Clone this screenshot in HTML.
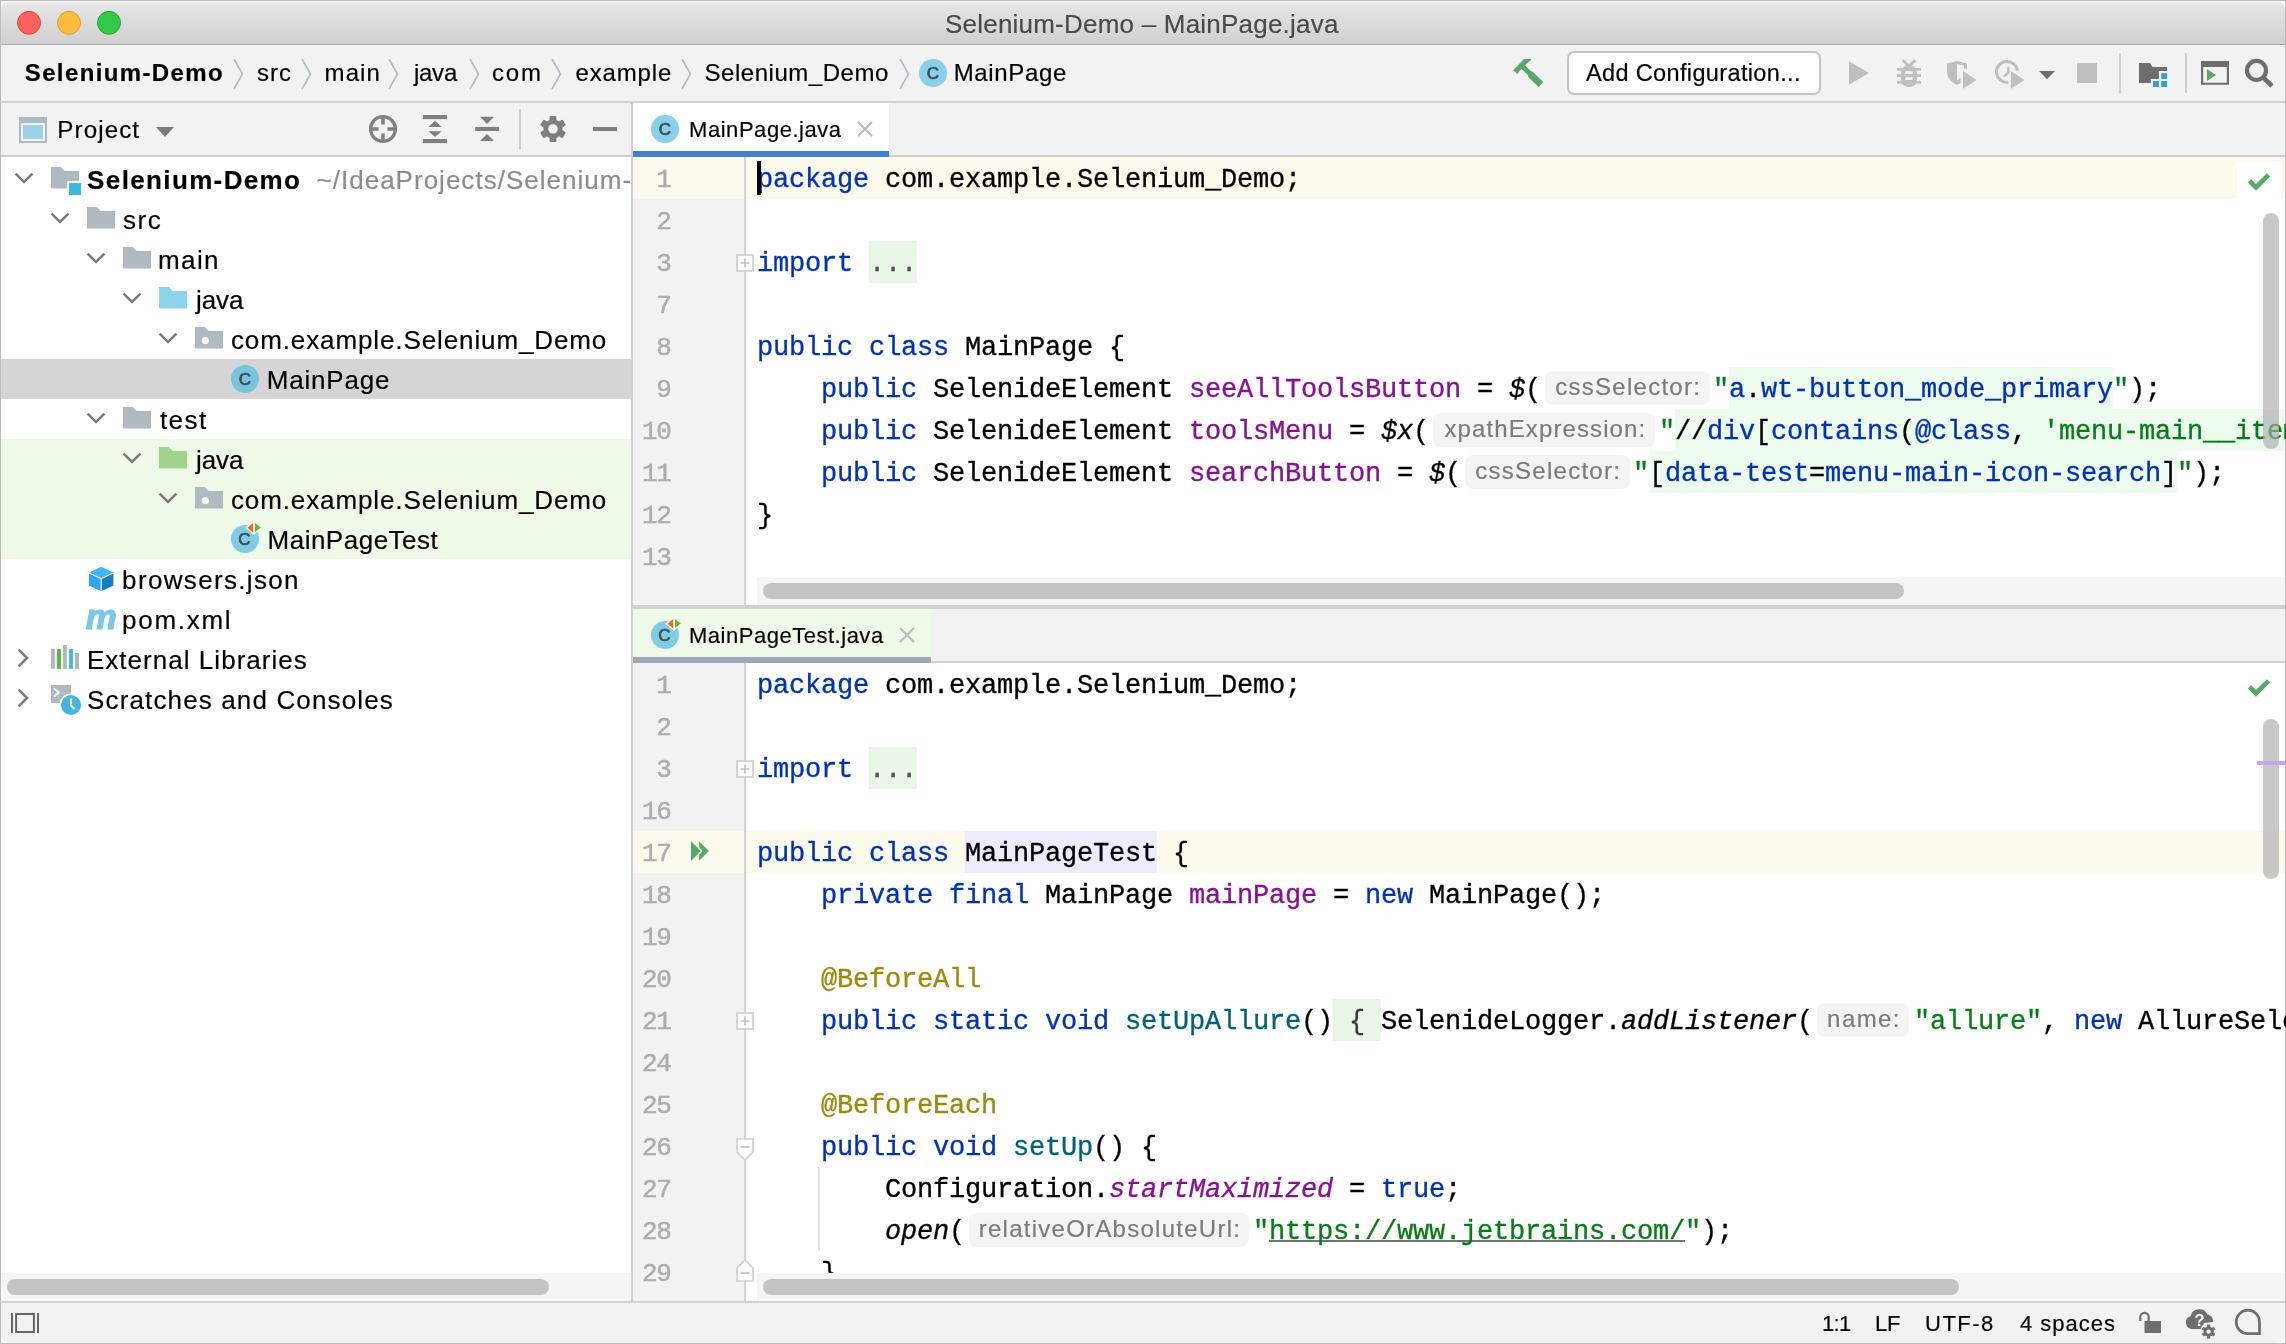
<!DOCTYPE html>
<html><head><meta charset="utf-8"><title>Selenium-Demo – MainPage.java</title>
<style>
html,body{margin:0;padding:0;background:#fff;}
body{width:2286px;height:1344px;position:relative;overflow:hidden;font-family:'Liberation Sans',sans-serif;}
#w div,#w span,#w svg{position:absolute;white-space:pre;}
#w svg{overflow:visible}
#w{position:absolute;left:0;top:0;width:2286px;height:1344px;overflow:hidden;will-change:transform;}
</style></head><body><div id="w">
<div style="left:0px;top:0px;width:2286px;height:1344px;background:#fff;"></div>
<div style="left:0px;top:0px;width:2286px;height:1px;background:#bcbcbc;"></div>
<div style="left:0px;top:0px;width:1px;height:1344px;background:#bcbcbc;"></div>
<div style="left:2285px;top:0px;width:1px;height:1344px;background:#bcbcbc;"></div>
<div style="left:0px;top:1343px;width:2286px;height:1px;background:#bcbcbc;"></div>
<div style="left:1px;top:1px;width:2284px;height:1342px;background:#f2f2f2;border-radius:9px;"></div>
<div style="left:1px;top:1px;width:2284px;height:43px;background:linear-gradient(#f5f5f5 0,#f5f5f5 1px,#e6e6e6 2px,#d0d0d0 100%);border-radius:9px 9px 0 0;"></div>
<div style="left:1px;top:44px;width:2284px;height:1px;background:#aaaaaa;"></div>
<svg style="left:0px;top:0px" width="140" height="44" viewBox="0 0 140 44"><circle cx="29" cy="22.8" r="11.5" fill="#fc615d" stroke="#e0443e" stroke-width="1"/>
<circle cx="69" cy="22.8" r="11.5" fill="#fdbc40" stroke="#dea023" stroke-width="1"/>
<circle cx="109" cy="22.8" r="11.5" fill="#34c84a" stroke="#1daa2b" stroke-width="1"/></svg>
<div style="left:1px;top:101px;width:2284px;height:2px;background:#d1d1d1;"></div>
<div style="left:1px;top:155px;width:631px;height:2px;background:#d1d1d1;"></div>
<div style="left:1px;top:157px;width:630px;height:1144px;background:#fff;"></div>
<div style="left:631px;top:103px;width:2px;height:1199px;background:#d1d1d1;"></div>
<div style="left:1px;top:1301px;width:2284px;height:2px;background:#d1d1d1;"></div>
<svg style="left:232.5px;top:58px" width="11" height="32" viewBox="0 0 11 32"><path d="M1,1 L9.5,16 L1,31" fill="none" stroke="#b3bbc0" stroke-width="1.6"/></svg>
<svg style="left:300.75px;top:58px" width="11" height="32" viewBox="0 0 11 32"><path d="M1,1 L9.5,16 L1,31" fill="none" stroke="#b3bbc0" stroke-width="1.6"/></svg>
<svg style="left:388px;top:58px" width="11" height="32" viewBox="0 0 11 32"><path d="M1,1 L9.5,16 L1,31" fill="none" stroke="#b3bbc0" stroke-width="1.6"/></svg>
<svg style="left:468.75px;top:58px" width="11" height="32" viewBox="0 0 11 32"><path d="M1,1 L9.5,16 L1,31" fill="none" stroke="#b3bbc0" stroke-width="1.6"/></svg>
<svg style="left:550.5px;top:58px" width="11" height="32" viewBox="0 0 11 32"><path d="M1,1 L9.5,16 L1,31" fill="none" stroke="#b3bbc0" stroke-width="1.6"/></svg>
<svg style="left:680.75px;top:58px" width="11" height="32" viewBox="0 0 11 32"><path d="M1,1 L9.5,16 L1,31" fill="none" stroke="#b3bbc0" stroke-width="1.6"/></svg>
<svg style="left:899px;top:58px" width="11" height="32" viewBox="0 0 11 32"><path d="M1,1 L9.5,16 L1,31" fill="none" stroke="#b3bbc0" stroke-width="1.6"/></svg>
<svg style="left:916.75px;top:56.75px" width="32" height="32" viewBox="0 0 32 32"><circle cx="16" cy="16" r="14" fill="#89d0ea"/><text x="16" y="21.6" text-anchor="middle" font-family="Liberation Sans,sans-serif" font-size="17" fill="#3f4d57" stroke="#3f4d57" stroke-width="0.7">C</text></svg>
<svg style="left:1510px;top:56px" width="36" height="34" viewBox="1510 56 36 34"><path d="M1513.2,70.2 L1524,59.1 L1531,59.1 L1531,60.3 Q1527.5,62 1525,65.6 L1530.8,71 L1532.9,71.9 L1543.3,82 L1538.5,87 L1528,76.7 L1528,75 L1521.4,68.8 L1517.3,74.1 Z" fill="#59a869"/></svg>
<div style="left:1567px;top:51px;width:254px;height:44px;box-sizing:border-box;border:2px solid #c4c4c4;border-radius:7px;background:#fff"></div>
<svg style="left:1846px;top:58px" width="26" height="30" viewBox="1846 58 26 30"><path d="M1849,61.2 L1869,73 L1849,84.8 Z" fill="#bfbfbf"/></svg>
<svg style="left:1894px;top:56px" width="30" height="34" viewBox="1894 56 30 34"><g fill="#bfbfbf"><path d="M1901,75 Q1901,65 1909,65 Q1917,65 1917,75 L1917,79 Q1917,87 1909,87 Q1901,87 1901,79 Z"/>
<rect x="1897" y="68" width="24" height="2.7"/><rect x="1897" y="74.2" width="24" height="2.8"/><rect x="1897" y="81" width="24" height="2.7"/></g>
<path d="M1902.6,60 L1909,66.4 L1915.4,60" fill="none" stroke="#bfbfbf" stroke-width="3"/>
<g fill="#f2f2f2"><rect x="1905.2" y="71.1" width="7.5" height="2.8"/><rect x="1905.2" y="77.2" width="7.5" height="2.8"/></g></svg>
<svg style="left:1944px;top:58px" width="36" height="34" viewBox="1944 58 36 34"><path d="M1947,63.4 L1957,60.9 L1957,85 Q1947,80.5 1947,72 Z" fill="#bfbfbf"/>
<path d="M1957,62.4 L1965.5,64.6 L1965.5,68.8" fill="none" stroke="#bfbfbf" stroke-width="3"/>
<path d="M1957,80.8 L1960.6,77.6 L1960.6,83 L1957,85 Z" fill="#bfbfbf"/>
<path d="M1963,71.1 L1976.6,79.9 L1963,88.7 Z" fill="#bfbfbf" stroke="#f2f2f2" stroke-width="0"/></svg>
<svg style="left:1992px;top:56px" width="36" height="36" viewBox="1992 56 36 36"><path d="M2017.4,70.6 A10.5,10.5 0 1 0 2008.4,82.3" fill="none" stroke="#bfbfbf" stroke-width="3"/>
<path d="M2008.3,66.6 L2008.3,72.6 L2004,76.6" fill="none" stroke="#bfbfbf" stroke-width="2.4"/>
<path d="M2010.8,71.1 L2024.6,79.9 L2010.8,88.7 Z" fill="#bfbfbf"/></svg>
<svg style="left:2036px;top:68px" width="22" height="14" viewBox="2036 68 22 14"><path d="M2039,70.9 L2055,70.9 L2047,79.2 Z" fill="#6e6e6e"/></svg>
<div style="left:2077px;top:63px;width:20px;height:20px;background:#bfbfbf;"></div>
<div style="left:2119px;top:53px;width:2px;height:40px;background:#cfcfcf;"></div>
<div style="left:2185px;top:53px;width:2px;height:40px;background:#cfcfcf;"></div>
<svg style="left:2136px;top:60px" width="34" height="30" viewBox="2136 60 34 30"><path d="M2139,63.1 H2150 L2152.4,67.1 H2167 V70.9 H2158.9 V78.9 H2150.8 V83 H2139 Z" fill="#6e6e6e"/>
<g fill="#389fd6"><rect x="2161.2" y="73.1" width="5.9" height="5.9"/><rect x="2153" y="81" width="5.9" height="6"/><rect x="2161.2" y="81" width="5.9" height="6"/></g></svg>
<svg style="left:2199px;top:59px" width="32" height="28" viewBox="2199 59 32 28"><path d="M2201,61 H2229 V84.8 H2201 Z M2203.2,67 V82.8 H2226.8 V67 Z" fill="#6e6e6e" fill-rule="evenodd"/>
<path d="M2206.9,68.9 L2216.1,75 L2206.9,81 Z" fill="#59a869"/></svg>
<svg style="left:2242px;top:56px" width="34" height="34" viewBox="2242 56 34 34"><circle cx="2256.5" cy="70.4" r="9.5" fill="none" stroke="#6e6e6e" stroke-width="4.2"/><path d="M2263.4,77.6 L2272,86" stroke="#6e6e6e" stroke-width="4.6"/></svg>
<svg style="left:19px;top:117px" width="28" height="26" viewBox="0 0 28 26"><rect x="0" y="0" width="28" height="26" fill="#aeb9c0"/><rect x="2" y="6" width="24" height="18" fill="#f2f2f2"/><rect x="4" y="8" width="20" height="14" fill="#9ad4ec"/></svg>
<svg style="left:156px;top:127px" width="18" height="11" viewBox="0 0 18 11"><path d="M0,0 L18,0 L9,10 Z" fill="#7a7a7a"/></svg>
<svg style="left:366px;top:112px" width="34" height="34" viewBox="366 112 34 34"><circle cx="383" cy="129" r="12.4" fill="none" stroke="#7f7f7f" stroke-width="3.3"/>
<g stroke="#7f7f7f" stroke-width="3.5"><path d="M383,116 V124.6"/><path d="M383,133.4 V142"/><path d="M370,129 H378.6"/><path d="M387.4,129 H396"/></g></svg>
<svg style="left:420px;top:112px" width="30" height="34" viewBox="420 112 30 34"><g fill="#7f7f7f"><rect x="423" y="115" width="24" height="4.1"/><rect x="423" y="139" width="24" height="4.1"/>
<path d="M435,120.8 L441.6,126.9 L428.4,126.9 Z"/><path d="M435,137.1 L441.6,131.2 L428.4,131.2 Z"/></g></svg>
<svg style="left:472px;top:112px" width="30" height="34" viewBox="472 112 30 34"><g fill="#7f7f7f"><rect x="475.2" y="126.9" width="23.8" height="4.1"/>
<path d="M487,124 L494,116.8 L480,116.8 Z"/><path d="M487,133.9 L494,141 L480,141 Z"/></g></svg>
<div style="left:519px;top:109px;width:2px;height:40px;background:#cdcdcd;"></div>
<svg style="left:538px;top:113px" width="30" height="32" viewBox="538 113 30 32"><g transform="translate(553,128.9)"><g fill="#7f7f7f">
<rect x="-3.4" y="-13" width="6.8" height="26" rx="1.2"/><rect x="-3.4" y="-13" width="6.8" height="26" rx="1.2" transform="rotate(60)"/><rect x="-3.4" y="-13" width="6.8" height="26" rx="1.2" transform="rotate(120)"/>
<circle r="9.6"/></g><circle r="4.7" fill="#f2f2f2"/></g></svg>
<div style="left:593px;top:127px;width:24px;height:4px;background:#7f7f7f;"></div>
<div style="left:1px;top:359px;width:630px;height:40px;background:#d5d5d5;"></div>
<div style="left:1px;top:439px;width:630px;height:120px;background:#eff9e7;"></div>
<svg style="left:14.200000000000003px;top:170.6px" width="20" height="14" viewBox="0 0 20 14"><path d="M1.6,2.6 L10,11 L18.4,2.6" fill="none" stroke="#7c7c7c" stroke-width="2.6"/></svg>
<svg style="left:49px;top:163px" width="32" height="32" viewBox="0 0 32 32"><path d="M2,4 H11.6 L15.8,8 H30 V25.6 H2 Z" fill="#aeb9c0"/><rect x="18" y="18" width="16" height="16" fill="#fff"/><rect x="20" y="20" width="12" height="12" fill="#40b6e0"/></svg>
<svg style="left:50.2px;top:210.6px" width="20" height="14" viewBox="0 0 20 14"><path d="M1.6,2.6 L10,11 L18.4,2.6" fill="none" stroke="#7c7c7c" stroke-width="2.6"/></svg>
<svg style="left:85px;top:203px" width="32" height="32" viewBox="0 0 32 32"><path d="M2,4 H11.6 L15.8,8 H30 V25.6 H2 Z" fill="#aeb9c0"/></svg>
<svg style="left:86.2px;top:250.60000000000002px" width="20" height="14" viewBox="0 0 20 14"><path d="M1.6,2.6 L10,11 L18.4,2.6" fill="none" stroke="#7c7c7c" stroke-width="2.6"/></svg>
<svg style="left:121px;top:243px" width="32" height="32" viewBox="0 0 32 32"><path d="M2,4 H11.6 L15.8,8 H30 V25.6 H2 Z" fill="#aeb9c0"/></svg>
<svg style="left:122.19999999999999px;top:290.6px" width="20" height="14" viewBox="0 0 20 14"><path d="M1.6,2.6 L10,11 L18.4,2.6" fill="none" stroke="#7c7c7c" stroke-width="2.6"/></svg>
<svg style="left:157px;top:283px" width="32" height="32" viewBox="0 0 32 32"><path d="M2,4 H11.6 L15.8,8 H30 V25.6 H2 Z" fill="#8cd3ec"/></svg>
<svg style="left:158.2px;top:330.6px" width="20" height="14" viewBox="0 0 20 14"><path d="M1.6,2.6 L10,11 L18.4,2.6" fill="none" stroke="#7c7c7c" stroke-width="2.6"/></svg>
<svg style="left:193px;top:323px" width="32" height="32" viewBox="0 0 32 32"><path d="M2,4 H11.6 L15.8,8 H30 V25.6 H2 Z" fill="#aeb9c0"/><circle cx="12.3" cy="17.6" r="3.6" fill="#fff"/></svg>
<svg style="left:229px;top:363px" width="32" height="32" viewBox="0 0 32 32"><circle cx="16" cy="16" r="14" fill="#7ac3dc"/><text x="16" y="21.6" text-anchor="middle" font-family="Liberation Sans,sans-serif" font-size="17" fill="#3f4d57" stroke="#3f4d57" stroke-width="0.7">C</text></svg>
<svg style="left:86.2px;top:410.6px" width="20" height="14" viewBox="0 0 20 14"><path d="M1.6,2.6 L10,11 L18.4,2.6" fill="none" stroke="#7c7c7c" stroke-width="2.6"/></svg>
<svg style="left:121px;top:403px" width="32" height="32" viewBox="0 0 32 32"><path d="M2,4 H11.6 L15.8,8 H30 V25.6 H2 Z" fill="#aeb9c0"/></svg>
<svg style="left:122.19999999999999px;top:450.6px" width="20" height="14" viewBox="0 0 20 14"><path d="M1.6,2.6 L10,11 L18.4,2.6" fill="none" stroke="#7c7c7c" stroke-width="2.6"/></svg>
<svg style="left:157px;top:443px" width="32" height="32" viewBox="0 0 32 32"><path d="M2,4 H11.6 L15.8,8 H30 V25.6 H2 Z" fill="#a1d38e"/></svg>
<svg style="left:158.2px;top:490.6px" width="20" height="14" viewBox="0 0 20 14"><path d="M1.6,2.6 L10,11 L18.4,2.6" fill="none" stroke="#7c7c7c" stroke-width="2.6"/></svg>
<svg style="left:193px;top:483px" width="32" height="32" viewBox="0 0 32 32"><path d="M2,4 H11.6 L15.8,8 H30 V25.6 H2 Z" fill="#aeb9c0"/><circle cx="12.3" cy="17.6" r="3.6" fill="#eff9e7"/></svg>
<svg style="left:229px;top:523px" width="34" height="32" viewBox="0 0 34 32"><circle cx="16" cy="16" r="14" fill="#80cce4"/>
<text x="15.3" y="21.8" text-anchor="middle" font-family="Liberation Sans,sans-serif" font-size="17" fill="#3f4d57" stroke="#3f4d57" stroke-width="0.7">C</text>
<g stroke="#eff9e7" stroke-width="2.6" paint-order="stroke" stroke-linejoin="miter"><path d="M24.2,0.1 V9.5 L18.4,4.8 Z" fill="#f26522"/><path d="M26,0 V9 L31.8,4.5 Z" fill="#62b543"/></g></svg>
<svg style="left:88px;top:566px" width="27" height="26" viewBox="0 0 27 26"><path d="M13.2,0.8 L25.4,6.4 L13.2,12 L1,6.4 Z" fill="#40b6ff"/>
<path d="M1,7.6 L12.6,13 L12.6,25 L1,19.4 Z" fill="#2aa5f2"/>
<path d="M25.4,7.6 L13.8,13 L13.8,25 L25.4,19.4 Z" fill="#1a7cc0"/></svg>
<svg style="left:84px;top:600px" width="36" height="34" viewBox="0 0 36 34"><text x="1.8" y="29" font-family="Liberation Sans,sans-serif" font-size="35.5" font-weight="bold" font-style="italic" fill="#78c8e6" stroke="#78c8e6" stroke-width="1.1" textLength="31" lengthAdjust="spacingAndGlyphs">m</text></svg>
<svg style="left:15.599999999999994px;top:647.8px" width="14" height="20" viewBox="0 0 14 20"><path d="M2.6,1.6 L11,10 L2.6,18.4" fill="none" stroke="#7c7c7c" stroke-width="2.6"/></svg>
<svg style="left:51px;top:644px" width="30" height="26" viewBox="0 0 30 26"><g fill="#aeb9c0"><rect x="0" y="5.1" width="3.9" height="19.7"/><rect x="12" y="1" width="3.9" height="23.8"/><rect x="24" y="9" width="4" height="15.8"/></g>
<rect x="5.9" y="5.1" width="4.1" height="19.7" fill="#62b543"/><rect x="18.1" y="5.1" width="3.8" height="19.7" fill="#40b6e0"/></svg>
<svg style="left:15.599999999999994px;top:687.8px" width="14" height="20" viewBox="0 0 14 20"><path d="M2.6,1.6 L11,10 L2.6,18.4" fill="none" stroke="#7c7c7c" stroke-width="2.6"/></svg>
<svg style="left:51px;top:684px" width="32" height="32" viewBox="0 0 32 32"><rect x="0" y="1" width="20" height="18" fill="#aeb9c0"/><path d="M3,4.5 L8,8.5 L3,12.5" fill="none" stroke="#fff" stroke-width="1.8"/>
<circle cx="20" cy="21" r="11.5" fill="#fff"/><circle cx="20" cy="21" r="10" fill="#40b6e0"/><path d="M20,14.5 V21.5 L23.5,25" fill="none" stroke="#fff" stroke-width="2.2"/></svg>
<div style="left:1px;top:1273px;width:630px;height:28px;background:#f5f5f5;"></div>
<div style="left:7px;top:1279px;width:542px;height:16px;background:#c4c4c4;border-radius:8px"></div>
<svg style="left:10px;top:1312px" width="30" height="22" viewBox="0 0 30 22"><g fill="none" stroke="#606060" stroke-width="1.9"><path d="M2,1 V21"/><path d="M28,1 V21"/><rect x="6.1" y="2" width="17.8" height="18"/></g></svg>
<svg style="left:2138px;top:1310px" width="24" height="24" viewBox="0 0 24 24"><rect x="6.5" y="11" width="16.5" height="12" fill="#6e6e6e"/><path d="M2.3,11 V7 A4.2,4.2 0 0 1 10.7,7 V11" fill="none" stroke="#6e6e6e" stroke-width="2.2"/></svg>
<svg style="left:2184px;top:1308px" width="34" height="32" viewBox="0 0 34 32"><path d="M8,21 A6.5,6.5 0 0 1 6.5,8.3 A9,9 0 0 1 23.5,6.5 A6.5,6.5 0 0 1 29,14 L20,15 L17,21 Z" fill="#6e6e6e"/>
<text x="15.5" y="17.5" text-anchor="middle" font-family="Liberation Sans,sans-serif" font-size="17" font-weight="bold" fill="#f2f2f2">?</text>
<g transform="translate(24.6,23.6)"><circle r="8.6" fill="#f2f2f2"/><g fill="#6e6e6e"><rect x="-1.6" y="-7" width="3.2" height="14"/><rect x="-1.6" y="-7" width="3.2" height="14" transform="rotate(60)"/><rect x="-1.6" y="-7" width="3.2" height="14" transform="rotate(120)"/><circle r="5"/></g><circle r="2.2" fill="#f2f2f2"/></g></svg>
<svg style="left:2234px;top:1308px" width="28" height="28" viewBox="0 0 28 28"><path d="M13.9,2.2 A11.6,11.6 0 1 0 13.9,25.6 H25.5 V13.8 A11.6,11.6 0 0 0 13.9,2.2 Z" fill="none" stroke="#6e6e6e" stroke-width="2.7"/></svg>
<div style="left:633px;top:155px;width:1652px;height:2px;background:#d1d1d1;"></div>
<div style="left:633px;top:103px;width:256px;height:48px;background:#fff;"></div>
<div style="left:633px;top:151px;width:256px;height:6px;background:#4083c9;"></div>
<svg style="left:649px;top:113px" width="32" height="32" viewBox="0 0 32 32"><circle cx="16" cy="16" r="14" fill="#89d0ea"/><text x="16" y="21.6" text-anchor="middle" font-family="Liberation Sans,sans-serif" font-size="17" fill="#3f4d57" stroke="#3f4d57" stroke-width="0.7">C</text></svg>
<svg style="left:857px;top:121px" width="16" height="16" viewBox="0 0 16 16"><path d="M1,1 L15,15 M15,1 L1,15" stroke="#b4bcc1" stroke-width="2" fill="none"/></svg>
<div style="left:633px;top:157px;width:1652px;height:448px;background:#fff;"></div>
<div style="left:633px;top:157px;width:111px;height:448px;background:#f2f2f2;"></div>
<div style="left:633px;top:157px;width:1652px;height:42px;background:#fcfaed;"></div>
<div style="left:744px;top:157px;width:2px;height:448px;background:#d4d4d4;"></div>
<div style="left:1729px;top:367px;width:384px;height:42px;background:#edfcee;"></div>
<div style="left:1675px;top:409px;width:609px;height:42px;background:#edfcee;"></div>
<div style="left:1649px;top:451px;width:528px;height:42px;background:#edfcee;"></div>
<div style="left:869px;top:241px;width:48px;height:42px;background:#e9f5e6;"></div>
<span style="left:656.1999999999999px;top:158.80px;font:normal 27px/42px 'Liberation Mono',monospace;height:42px;letter-spacing:-0.2026px;color:#adadad;-webkit-text-stroke:0.3px;font-size:26px;letter-spacing:-1.4px;-webkit-text-stroke:0.5px;">1</span>
<span style="left:656.1999999999999px;top:200.80px;font:normal 27px/42px 'Liberation Mono',monospace;height:42px;letter-spacing:-0.2026px;color:#adadad;-webkit-text-stroke:0.3px;font-size:26px;letter-spacing:-1.4px;-webkit-text-stroke:0.5px;">2</span>
<span style="left:656.1999999999999px;top:242.80px;font:normal 27px/42px 'Liberation Mono',monospace;height:42px;letter-spacing:-0.2026px;color:#adadad;-webkit-text-stroke:0.3px;font-size:26px;letter-spacing:-1.4px;-webkit-text-stroke:0.5px;">3</span>
<span style="left:656.1999999999999px;top:284.80px;font:normal 27px/42px 'Liberation Mono',monospace;height:42px;letter-spacing:-0.2026px;color:#adadad;-webkit-text-stroke:0.3px;font-size:26px;letter-spacing:-1.4px;-webkit-text-stroke:0.5px;">7</span>
<span style="left:656.1999999999999px;top:326.80px;font:normal 27px/42px 'Liberation Mono',monospace;height:42px;letter-spacing:-0.2026px;color:#adadad;-webkit-text-stroke:0.3px;font-size:26px;letter-spacing:-1.4px;-webkit-text-stroke:0.5px;">8</span>
<span style="left:656.1999999999999px;top:368.80px;font:normal 27px/42px 'Liberation Mono',monospace;height:42px;letter-spacing:-0.2026px;color:#adadad;-webkit-text-stroke:0.3px;font-size:26px;letter-spacing:-1.4px;-webkit-text-stroke:0.5px;">9</span>
<span style="left:642.0px;top:410.80px;font:normal 27px/42px 'Liberation Mono',monospace;height:42px;letter-spacing:-0.2026px;color:#adadad;-webkit-text-stroke:0.3px;font-size:26px;letter-spacing:-1.4px;-webkit-text-stroke:0.5px;">10</span>
<span style="left:642.0px;top:452.80px;font:normal 27px/42px 'Liberation Mono',monospace;height:42px;letter-spacing:-0.2026px;color:#adadad;-webkit-text-stroke:0.3px;font-size:26px;letter-spacing:-1.4px;-webkit-text-stroke:0.5px;">11</span>
<span style="left:642.0px;top:494.80px;font:normal 27px/42px 'Liberation Mono',monospace;height:42px;letter-spacing:-0.2026px;color:#adadad;-webkit-text-stroke:0.3px;font-size:26px;letter-spacing:-1.4px;-webkit-text-stroke:0.5px;">12</span>
<span style="left:642.0px;top:536.80px;font:normal 27px/42px 'Liberation Mono',monospace;height:42px;letter-spacing:-0.2026px;color:#adadad;-webkit-text-stroke:0.3px;font-size:26px;letter-spacing:-1.4px;-webkit-text-stroke:0.5px;">13</span>
<span style="left:757px;top:158.80px;font:normal 27px/42px 'Liberation Mono',monospace;height:42px;letter-spacing:-0.2026px;color:#0033b3;-webkit-text-stroke:0.3px;">package</span>
<span style="left:869px;top:158.80px;font:normal 27px/42px 'Liberation Mono',monospace;height:42px;letter-spacing:-0.2026px;color:#000;-webkit-text-stroke:0.3px;"> com.example.Selenium_Demo;</span>
<div style="left:757px;top:161px;width:4px;height:34px;background:#000;"></div>
<svg style="left:736px;top:254px" width="18" height="18" viewBox="0 0 18 18"><rect x="1" y="1" width="16" height="16" fill="#fff" stroke="#cfcfcf" stroke-width="1.7"/><path d="M4.5,9 H13.5 M9,4.5 V13.5" stroke="#c2c2c2" stroke-width="1.7" fill="none"/></svg>
<span style="left:757px;top:242.80px;font:normal 27px/42px 'Liberation Mono',monospace;height:42px;letter-spacing:-0.2026px;color:#0033b3;-webkit-text-stroke:0.3px;">import</span>
<span style="left:869px;top:242.80px;font:normal 27px/42px 'Liberation Mono',monospace;height:42px;letter-spacing:-0.2026px;color:#4f4f4f;-webkit-text-stroke:0.3px;">...</span>
<span style="left:757px;top:326.80px;font:normal 27px/42px 'Liberation Mono',monospace;height:42px;letter-spacing:-0.2026px;color:#0033b3;-webkit-text-stroke:0.3px;">public</span>
<span style="left:869px;top:326.80px;font:normal 27px/42px 'Liberation Mono',monospace;height:42px;letter-spacing:-0.2026px;color:#0033b3;-webkit-text-stroke:0.3px;">class</span>
<span style="left:949px;top:326.80px;font:normal 27px/42px 'Liberation Mono',monospace;height:42px;letter-spacing:-0.2026px;color:#000;-webkit-text-stroke:0.3px;"> MainPage {</span>
<span style="left:821px;top:368.80px;font:normal 27px/42px 'Liberation Mono',monospace;height:42px;letter-spacing:-0.2026px;color:#0033b3;-webkit-text-stroke:0.3px;">public</span>
<span style="left:917px;top:368.80px;font:normal 27px/42px 'Liberation Mono',monospace;height:42px;letter-spacing:-0.2026px;color:#000;-webkit-text-stroke:0.3px;"> SelenideElement </span>
<span style="left:1189px;top:368.80px;font:normal 27px/42px 'Liberation Mono',monospace;height:42px;letter-spacing:-0.2026px;color:#871094;-webkit-text-stroke:0.3px;">seeAllToolsButton</span>
<span style="left:1461px;top:368.80px;font:normal 27px/42px 'Liberation Mono',monospace;height:42px;letter-spacing:-0.2026px;color:#000;-webkit-text-stroke:0.3px;"> = </span>
<span style="left:1509px;top:368.80px;font:italic 27px/42px 'Liberation Mono',monospace;height:42px;letter-spacing:-0.2026px;color:#000;-webkit-text-stroke:0.3px;">$</span>
<span style="left:1525px;top:368.80px;font:normal 27px/42px 'Liberation Mono',monospace;height:42px;letter-spacing:-0.2026px;color:#000;-webkit-text-stroke:0.3px;">(</span>
<div style="left:1545px;top:371px;width:164.5px;height:34px;background:#f4f4f4;border-radius:8px"></div>
<span style="left:1713px;top:368.80px;font:normal 27px/42px 'Liberation Mono',monospace;height:42px;letter-spacing:-0.2026px;color:#067d17;-webkit-text-stroke:0.3px;">&quot;</span>
<span style="left:1729px;top:368.80px;font:normal 27px/42px 'Liberation Mono',monospace;height:42px;letter-spacing:-0.2026px;color:#0033b3;-webkit-text-stroke:0.3px;">a</span>
<span style="left:1745px;top:368.80px;font:normal 27px/42px 'Liberation Mono',monospace;height:42px;letter-spacing:-0.2026px;color:#000;-webkit-text-stroke:0.3px;">.</span>
<span style="left:1761px;top:368.80px;font:normal 27px/42px 'Liberation Mono',monospace;height:42px;letter-spacing:-0.2026px;color:#0033b3;-webkit-text-stroke:0.3px;">wt-button_mode_primary</span>
<span style="left:2113px;top:368.80px;font:normal 27px/42px 'Liberation Mono',monospace;height:42px;letter-spacing:-0.2026px;color:#067d17;-webkit-text-stroke:0.3px;">&quot;</span>
<span style="left:2129px;top:368.80px;font:normal 27px/42px 'Liberation Mono',monospace;height:42px;letter-spacing:-0.2026px;color:#000;-webkit-text-stroke:0.3px;">);</span>
<span style="left:821px;top:410.80px;font:normal 27px/42px 'Liberation Mono',monospace;height:42px;letter-spacing:-0.2026px;color:#0033b3;-webkit-text-stroke:0.3px;">public</span>
<span style="left:917px;top:410.80px;font:normal 27px/42px 'Liberation Mono',monospace;height:42px;letter-spacing:-0.2026px;color:#000;-webkit-text-stroke:0.3px;"> SelenideElement </span>
<span style="left:1189px;top:410.80px;font:normal 27px/42px 'Liberation Mono',monospace;height:42px;letter-spacing:-0.2026px;color:#871094;-webkit-text-stroke:0.3px;">toolsMenu</span>
<span style="left:1333px;top:410.80px;font:normal 27px/42px 'Liberation Mono',monospace;height:42px;letter-spacing:-0.2026px;color:#000;-webkit-text-stroke:0.3px;"> = </span>
<span style="left:1381px;top:410.80px;font:italic 27px/42px 'Liberation Mono',monospace;height:42px;letter-spacing:-0.2026px;color:#000;-webkit-text-stroke:0.3px;">$x</span>
<span style="left:1413px;top:410.80px;font:normal 27px/42px 'Liberation Mono',monospace;height:42px;letter-spacing:-0.2026px;color:#000;-webkit-text-stroke:0.3px;">(</span>
<div style="left:1433px;top:413px;width:222px;height:34px;background:#f4f4f4;border-radius:8px"></div>
<span style="left:1659px;top:410.80px;font:normal 27px/42px 'Liberation Mono',monospace;height:42px;letter-spacing:-0.2026px;color:#067d17;-webkit-text-stroke:0.3px;">&quot;</span>
<span style="left:1675px;top:410.80px;font:normal 27px/42px 'Liberation Mono',monospace;height:42px;letter-spacing:-0.2026px;color:#000;-webkit-text-stroke:0.3px;">//</span>
<span style="left:1707px;top:410.80px;font:normal 27px/42px 'Liberation Mono',monospace;height:42px;letter-spacing:-0.2026px;color:#0033b3;-webkit-text-stroke:0.3px;">div</span>
<span style="left:1755px;top:410.80px;font:normal 27px/42px 'Liberation Mono',monospace;height:42px;letter-spacing:-0.2026px;color:#000;-webkit-text-stroke:0.3px;">[</span>
<span style="left:1771px;top:410.80px;font:normal 27px/42px 'Liberation Mono',monospace;height:42px;letter-spacing:-0.2026px;color:#0033b3;-webkit-text-stroke:0.3px;">contains</span>
<span style="left:1899px;top:410.80px;font:normal 27px/42px 'Liberation Mono',monospace;height:42px;letter-spacing:-0.2026px;color:#000;-webkit-text-stroke:0.3px;">(</span>
<span style="left:1915px;top:410.80px;font:normal 27px/42px 'Liberation Mono',monospace;height:42px;letter-spacing:-0.2026px;color:#0033b3;-webkit-text-stroke:0.3px;">@class</span>
<span style="left:2011px;top:410.80px;font:normal 27px/42px 'Liberation Mono',monospace;height:42px;letter-spacing:-0.2026px;color:#000;-webkit-text-stroke:0.3px;">, </span>
<span style="left:2043px;top:410.80px;font:normal 27px/42px 'Liberation Mono',monospace;height:42px;letter-spacing:-0.2026px;color:#067d17;-webkit-text-stroke:0.3px;">&#x27;menu-main__item</span>
<span style="left:821px;top:452.80px;font:normal 27px/42px 'Liberation Mono',monospace;height:42px;letter-spacing:-0.2026px;color:#0033b3;-webkit-text-stroke:0.3px;">public</span>
<span style="left:917px;top:452.80px;font:normal 27px/42px 'Liberation Mono',monospace;height:42px;letter-spacing:-0.2026px;color:#000;-webkit-text-stroke:0.3px;"> SelenideElement </span>
<span style="left:1189px;top:452.80px;font:normal 27px/42px 'Liberation Mono',monospace;height:42px;letter-spacing:-0.2026px;color:#871094;-webkit-text-stroke:0.3px;">searchButton</span>
<span style="left:1381px;top:452.80px;font:normal 27px/42px 'Liberation Mono',monospace;height:42px;letter-spacing:-0.2026px;color:#000;-webkit-text-stroke:0.3px;"> = </span>
<span style="left:1429px;top:452.80px;font:italic 27px/42px 'Liberation Mono',monospace;height:42px;letter-spacing:-0.2026px;color:#000;-webkit-text-stroke:0.3px;">$</span>
<span style="left:1445px;top:452.80px;font:normal 27px/42px 'Liberation Mono',monospace;height:42px;letter-spacing:-0.2026px;color:#000;-webkit-text-stroke:0.3px;">(</span>
<div style="left:1465px;top:455px;width:164.5px;height:34px;background:#f4f4f4;border-radius:8px"></div>
<span style="left:1633px;top:452.80px;font:normal 27px/42px 'Liberation Mono',monospace;height:42px;letter-spacing:-0.2026px;color:#067d17;-webkit-text-stroke:0.3px;">&quot;</span>
<span style="left:1649px;top:452.80px;font:normal 27px/42px 'Liberation Mono',monospace;height:42px;letter-spacing:-0.2026px;color:#000;-webkit-text-stroke:0.3px;">[</span>
<span style="left:1665px;top:452.80px;font:normal 27px/42px 'Liberation Mono',monospace;height:42px;letter-spacing:-0.2026px;color:#0033b3;-webkit-text-stroke:0.3px;">data-test</span>
<span style="left:1809px;top:452.80px;font:normal 27px/42px 'Liberation Mono',monospace;height:42px;letter-spacing:-0.2026px;color:#000;-webkit-text-stroke:0.3px;">=</span>
<span style="left:1825px;top:452.80px;font:normal 27px/42px 'Liberation Mono',monospace;height:42px;letter-spacing:-0.2026px;color:#0033b3;-webkit-text-stroke:0.3px;">menu-main-icon-search</span>
<span style="left:2161px;top:452.80px;font:normal 27px/42px 'Liberation Mono',monospace;height:42px;letter-spacing:-0.2026px;color:#000;-webkit-text-stroke:0.3px;">]</span>
<span style="left:2177px;top:452.80px;font:normal 27px/42px 'Liberation Mono',monospace;height:42px;letter-spacing:-0.2026px;color:#067d17;-webkit-text-stroke:0.3px;">&quot;</span>
<span style="left:2193px;top:452.80px;font:normal 27px/42px 'Liberation Mono',monospace;height:42px;letter-spacing:-0.2026px;color:#000;-webkit-text-stroke:0.3px;">);</span>
<span style="left:757px;top:494.80px;font:normal 27px/42px 'Liberation Mono',monospace;height:42px;letter-spacing:-0.2026px;color:#000;-webkit-text-stroke:0.3px;">}</span>
<div style="left:757px;top:577px;width:1528px;height:28px;background:#f5f5f5;"></div>
<div style="left:763px;top:583px;width:1141px;height:16px;background:#c4c4c4;border-radius:8px"></div>
<div style="left:2237px;top:161px;width:44px;height:38px;background:#fff;border-radius:5px 5px 0 0;"></div>
<svg style="left:2246.5px;top:171.5px" width="24" height="20" viewBox="0 0 24 20"><path d="M0.8,10.6 L4.2,7.2 L9,12 L19.8,1.2 L23.2,4.6 L9,18.8 Z" fill="#59a869"/></svg>
<div style="left:2263px;top:213px;width:16px;height:236px;background:rgba(170,170,170,0.65);border-radius:8px"></div>
<div style="left:633px;top:605px;width:1652px;height:4px;background:#d1d1d1;"></div>
<div style="left:633px;top:661px;width:1652px;height:2px;background:#d1d1d1;"></div>
<div style="left:633px;top:609px;width:298px;height:48px;background:#eff9e7;"></div>
<div style="left:633px;top:657px;width:298px;height:6px;background:#9ca7ba;"></div>
<svg style="left:649px;top:619px" width="34" height="32" viewBox="0 0 34 32"><circle cx="16" cy="16" r="14" fill="#80cce4"/>
<text x="15.3" y="21.8" text-anchor="middle" font-family="Liberation Sans,sans-serif" font-size="17" fill="#3f4d57" stroke="#3f4d57" stroke-width="0.7">C</text>
<g stroke="#eff9e7" stroke-width="2.6" paint-order="stroke" stroke-linejoin="miter"><path d="M24.2,0.1 V9.5 L18.4,4.8 Z" fill="#f26522"/><path d="M26,0 V9 L31.8,4.5 Z" fill="#62b543"/></g></svg>
<svg style="left:899px;top:627px" width="16" height="16" viewBox="0 0 16 16"><path d="M1,1 L15,15 M15,1 L1,15" stroke="#b4bcc1" stroke-width="2" fill="none"/></svg>
<div style="left:633px;top:663px;width:1652px;height:638px;background:#fff;"></div>
<div style="left:633px;top:663px;width:111px;height:638px;background:#f2f2f2;"></div>
<div style="left:633px;top:831px;width:1652px;height:42px;background:#fcfaed;"></div>
<div style="left:744px;top:663px;width:2px;height:638px;background:#d4d4d4;"></div>
<div style="left:965px;top:831px;width:192px;height:42px;background:#edebfc;"></div>
<div style="left:869px;top:747px;width:48px;height:42px;background:#e9f5e6;"></div>
<div style="left:1333px;top:999px;width:48px;height:42px;background:#e9f5e6;"></div>
<div style="left:818px;top:1167px;width:2px;height:84px;background:#e3e3e3;"></div>
<span style="left:656.1999999999999px;top:664.80px;font:normal 27px/42px 'Liberation Mono',monospace;height:42px;letter-spacing:-0.2026px;color:#adadad;-webkit-text-stroke:0.3px;font-size:26px;letter-spacing:-1.4px;-webkit-text-stroke:0.5px;">1</span>
<span style="left:656.1999999999999px;top:706.80px;font:normal 27px/42px 'Liberation Mono',monospace;height:42px;letter-spacing:-0.2026px;color:#adadad;-webkit-text-stroke:0.3px;font-size:26px;letter-spacing:-1.4px;-webkit-text-stroke:0.5px;">2</span>
<span style="left:656.1999999999999px;top:748.80px;font:normal 27px/42px 'Liberation Mono',monospace;height:42px;letter-spacing:-0.2026px;color:#adadad;-webkit-text-stroke:0.3px;font-size:26px;letter-spacing:-1.4px;-webkit-text-stroke:0.5px;">3</span>
<span style="left:642.0px;top:790.80px;font:normal 27px/42px 'Liberation Mono',monospace;height:42px;letter-spacing:-0.2026px;color:#adadad;-webkit-text-stroke:0.3px;font-size:26px;letter-spacing:-1.4px;-webkit-text-stroke:0.5px;">16</span>
<span style="left:642.0px;top:832.80px;font:normal 27px/42px 'Liberation Mono',monospace;height:42px;letter-spacing:-0.2026px;color:#adadad;-webkit-text-stroke:0.3px;font-size:26px;letter-spacing:-1.4px;-webkit-text-stroke:0.5px;">17</span>
<span style="left:642.0px;top:874.80px;font:normal 27px/42px 'Liberation Mono',monospace;height:42px;letter-spacing:-0.2026px;color:#adadad;-webkit-text-stroke:0.3px;font-size:26px;letter-spacing:-1.4px;-webkit-text-stroke:0.5px;">18</span>
<span style="left:642.0px;top:916.80px;font:normal 27px/42px 'Liberation Mono',monospace;height:42px;letter-spacing:-0.2026px;color:#adadad;-webkit-text-stroke:0.3px;font-size:26px;letter-spacing:-1.4px;-webkit-text-stroke:0.5px;">19</span>
<span style="left:642.0px;top:958.80px;font:normal 27px/42px 'Liberation Mono',monospace;height:42px;letter-spacing:-0.2026px;color:#adadad;-webkit-text-stroke:0.3px;font-size:26px;letter-spacing:-1.4px;-webkit-text-stroke:0.5px;">20</span>
<span style="left:642.0px;top:1000.80px;font:normal 27px/42px 'Liberation Mono',monospace;height:42px;letter-spacing:-0.2026px;color:#adadad;-webkit-text-stroke:0.3px;font-size:26px;letter-spacing:-1.4px;-webkit-text-stroke:0.5px;">21</span>
<span style="left:642.0px;top:1042.80px;font:normal 27px/42px 'Liberation Mono',monospace;height:42px;letter-spacing:-0.2026px;color:#adadad;-webkit-text-stroke:0.3px;font-size:26px;letter-spacing:-1.4px;-webkit-text-stroke:0.5px;">24</span>
<span style="left:642.0px;top:1084.80px;font:normal 27px/42px 'Liberation Mono',monospace;height:42px;letter-spacing:-0.2026px;color:#adadad;-webkit-text-stroke:0.3px;font-size:26px;letter-spacing:-1.4px;-webkit-text-stroke:0.5px;">25</span>
<span style="left:642.0px;top:1126.80px;font:normal 27px/42px 'Liberation Mono',monospace;height:42px;letter-spacing:-0.2026px;color:#adadad;-webkit-text-stroke:0.3px;font-size:26px;letter-spacing:-1.4px;-webkit-text-stroke:0.5px;">26</span>
<span style="left:642.0px;top:1168.80px;font:normal 27px/42px 'Liberation Mono',monospace;height:42px;letter-spacing:-0.2026px;color:#adadad;-webkit-text-stroke:0.3px;font-size:26px;letter-spacing:-1.4px;-webkit-text-stroke:0.5px;">27</span>
<span style="left:642.0px;top:1210.80px;font:normal 27px/42px 'Liberation Mono',monospace;height:42px;letter-spacing:-0.2026px;color:#adadad;-webkit-text-stroke:0.3px;font-size:26px;letter-spacing:-1.4px;-webkit-text-stroke:0.5px;">28</span>
<span style="left:642.0px;top:1252.80px;font:normal 27px/42px 'Liberation Mono',monospace;height:42px;letter-spacing:-0.2026px;color:#adadad;-webkit-text-stroke:0.3px;font-size:26px;letter-spacing:-1.4px;-webkit-text-stroke:0.5px;">29</span>
<span style="left:757px;top:664.80px;font:normal 27px/42px 'Liberation Mono',monospace;height:42px;letter-spacing:-0.2026px;color:#0033b3;-webkit-text-stroke:0.3px;">package</span>
<span style="left:869px;top:664.80px;font:normal 27px/42px 'Liberation Mono',monospace;height:42px;letter-spacing:-0.2026px;color:#000;-webkit-text-stroke:0.3px;"> com.example.Selenium_Demo;</span>
<svg style="left:736px;top:760px" width="18" height="18" viewBox="0 0 18 18"><rect x="1" y="1" width="16" height="16" fill="#fff" stroke="#cfcfcf" stroke-width="1.7"/><path d="M4.5,9 H13.5 M9,4.5 V13.5" stroke="#c2c2c2" stroke-width="1.7" fill="none"/></svg>
<span style="left:757px;top:748.80px;font:normal 27px/42px 'Liberation Mono',monospace;height:42px;letter-spacing:-0.2026px;color:#0033b3;-webkit-text-stroke:0.3px;">import</span>
<span style="left:869px;top:748.80px;font:normal 27px/42px 'Liberation Mono',monospace;height:42px;letter-spacing:-0.2026px;color:#4f4f4f;-webkit-text-stroke:0.3px;">...</span>
<svg style="left:688px;top:838px" width="24" height="26" viewBox="688 838 24 26"><path d="M699.1,841.2 L708.9,850.9 L699.1,860.8 Z" fill="#59a869"/><path d="M691,841.1 L700.8,850.9 L691,861 Z" fill="#59a869" stroke="#fcfaed" stroke-width="2.6" paint-order="stroke"/></svg>
<span style="left:757px;top:832.80px;font:normal 27px/42px 'Liberation Mono',monospace;height:42px;letter-spacing:-0.2026px;color:#0033b3;-webkit-text-stroke:0.3px;">public</span>
<span style="left:869px;top:832.80px;font:normal 27px/42px 'Liberation Mono',monospace;height:42px;letter-spacing:-0.2026px;color:#0033b3;-webkit-text-stroke:0.3px;">class</span>
<span style="left:949px;top:832.80px;font:normal 27px/42px 'Liberation Mono',monospace;height:42px;letter-spacing:-0.2026px;color:#000;-webkit-text-stroke:0.3px;"> MainPageTest {</span>
<span style="left:821px;top:874.80px;font:normal 27px/42px 'Liberation Mono',monospace;height:42px;letter-spacing:-0.2026px;color:#0033b3;-webkit-text-stroke:0.3px;">private</span>
<span style="left:949px;top:874.80px;font:normal 27px/42px 'Liberation Mono',monospace;height:42px;letter-spacing:-0.2026px;color:#0033b3;-webkit-text-stroke:0.3px;">final</span>
<span style="left:1029px;top:874.80px;font:normal 27px/42px 'Liberation Mono',monospace;height:42px;letter-spacing:-0.2026px;color:#000;-webkit-text-stroke:0.3px;"> MainPage </span>
<span style="left:1189px;top:874.80px;font:normal 27px/42px 'Liberation Mono',monospace;height:42px;letter-spacing:-0.2026px;color:#871094;-webkit-text-stroke:0.3px;">mainPage</span>
<span style="left:1317px;top:874.80px;font:normal 27px/42px 'Liberation Mono',monospace;height:42px;letter-spacing:-0.2026px;color:#000;-webkit-text-stroke:0.3px;"> = </span>
<span style="left:1365px;top:874.80px;font:normal 27px/42px 'Liberation Mono',monospace;height:42px;letter-spacing:-0.2026px;color:#0033b3;-webkit-text-stroke:0.3px;">new</span>
<span style="left:1413px;top:874.80px;font:normal 27px/42px 'Liberation Mono',monospace;height:42px;letter-spacing:-0.2026px;color:#000;-webkit-text-stroke:0.3px;"> MainPage();</span>
<span style="left:821px;top:958.80px;font:normal 27px/42px 'Liberation Mono',monospace;height:42px;letter-spacing:-0.2026px;color:#9e880d;-webkit-text-stroke:0.3px;">@BeforeAll</span>
<svg style="left:736px;top:1012px" width="18" height="18" viewBox="0 0 18 18"><rect x="1" y="1" width="16" height="16" fill="#fff" stroke="#cfcfcf" stroke-width="1.7"/><path d="M4.5,9 H13.5 M9,4.5 V13.5" stroke="#c2c2c2" stroke-width="1.7" fill="none"/></svg>
<span style="left:821px;top:1000.80px;font:normal 27px/42px 'Liberation Mono',monospace;height:42px;letter-spacing:-0.2026px;color:#0033b3;-webkit-text-stroke:0.3px;">public</span>
<span style="left:933px;top:1000.80px;font:normal 27px/42px 'Liberation Mono',monospace;height:42px;letter-spacing:-0.2026px;color:#0033b3;-webkit-text-stroke:0.3px;">static</span>
<span style="left:1045px;top:1000.80px;font:normal 27px/42px 'Liberation Mono',monospace;height:42px;letter-spacing:-0.2026px;color:#0033b3;-webkit-text-stroke:0.3px;">void</span>
<span style="left:1125px;top:1000.80px;font:normal 27px/42px 'Liberation Mono',monospace;height:42px;letter-spacing:-0.2026px;color:#00627a;-webkit-text-stroke:0.3px;">setUpAllure</span>
<span style="left:1301px;top:1000.80px;font:normal 27px/42px 'Liberation Mono',monospace;height:42px;letter-spacing:-0.2026px;color:#000;-webkit-text-stroke:0.3px;">()</span>
<span style="left:1333px;top:1000.80px;font:normal 27px/42px 'Liberation Mono',monospace;height:42px;letter-spacing:-0.2026px;color:#3c3c3c;-webkit-text-stroke:0.3px;"> { </span>
<span style="left:1381px;top:1000.80px;font:normal 27px/42px 'Liberation Mono',monospace;height:42px;letter-spacing:-0.2026px;color:#000;-webkit-text-stroke:0.3px;">SelenideLogger.</span>
<span style="left:1621px;top:1000.80px;font:italic 27px/42px 'Liberation Mono',monospace;height:42px;letter-spacing:-0.2026px;color:#000;-webkit-text-stroke:0.3px;">addListener</span>
<span style="left:1797px;top:1000.80px;font:normal 27px/42px 'Liberation Mono',monospace;height:42px;letter-spacing:-0.2026px;color:#000;-webkit-text-stroke:0.3px;">(</span>
<div style="left:1817px;top:1003px;width:92px;height:34px;background:#f4f4f4;border-radius:8px"></div>
<span style="left:1914px;top:1000.80px;font:normal 27px/42px 'Liberation Mono',monospace;height:42px;letter-spacing:-0.2026px;color:#067d17;-webkit-text-stroke:0.3px;">&quot;allure&quot;</span>
<span style="left:2042px;top:1000.80px;font:normal 27px/42px 'Liberation Mono',monospace;height:42px;letter-spacing:-0.2026px;color:#000;-webkit-text-stroke:0.3px;">, </span>
<span style="left:2074px;top:1000.80px;font:normal 27px/42px 'Liberation Mono',monospace;height:42px;letter-spacing:-0.2026px;color:#0033b3;-webkit-text-stroke:0.3px;">new</span>
<span style="left:2122px;top:1000.80px;font:normal 27px/42px 'Liberation Mono',monospace;height:42px;letter-spacing:-0.2026px;color:#000;-webkit-text-stroke:0.3px;"> AllureSelenide</span>
<span style="left:821px;top:1084.80px;font:normal 27px/42px 'Liberation Mono',monospace;height:42px;letter-spacing:-0.2026px;color:#9e880d;-webkit-text-stroke:0.3px;">@BeforeEach</span>
<svg style="left:736px;top:1137.5px" width="18" height="24" viewBox="0 0 18 24"><path d="M1,1 H17 V14 L9,22 L1,14 Z" fill="#fff" stroke="#cfcfcf" stroke-width="1.7"/><path d="M4.5,9 H13.5" stroke="#c2c2c2" stroke-width="1.7"/></svg>
<span style="left:821px;top:1126.80px;font:normal 27px/42px 'Liberation Mono',monospace;height:42px;letter-spacing:-0.2026px;color:#0033b3;-webkit-text-stroke:0.3px;">public</span>
<span style="left:933px;top:1126.80px;font:normal 27px/42px 'Liberation Mono',monospace;height:42px;letter-spacing:-0.2026px;color:#0033b3;-webkit-text-stroke:0.3px;">void</span>
<span style="left:1013px;top:1126.80px;font:normal 27px/42px 'Liberation Mono',monospace;height:42px;letter-spacing:-0.2026px;color:#00627a;-webkit-text-stroke:0.3px;">setUp</span>
<span style="left:1093px;top:1126.80px;font:normal 27px/42px 'Liberation Mono',monospace;height:42px;letter-spacing:-0.2026px;color:#000;-webkit-text-stroke:0.3px;">() {</span>
<span style="left:885px;top:1168.80px;font:normal 27px/42px 'Liberation Mono',monospace;height:42px;letter-spacing:-0.2026px;color:#000;-webkit-text-stroke:0.3px;">Configuration.</span>
<span style="left:1109px;top:1168.80px;font:italic 27px/42px 'Liberation Mono',monospace;height:42px;letter-spacing:-0.2026px;color:#871094;-webkit-text-stroke:0.3px;">startMaximized</span>
<span style="left:1333px;top:1168.80px;font:normal 27px/42px 'Liberation Mono',monospace;height:42px;letter-spacing:-0.2026px;color:#000;-webkit-text-stroke:0.3px;"> = </span>
<span style="left:1381px;top:1168.80px;font:normal 27px/42px 'Liberation Mono',monospace;height:42px;letter-spacing:-0.2026px;color:#0033b3;-webkit-text-stroke:0.3px;">true</span>
<span style="left:1445px;top:1168.80px;font:normal 27px/42px 'Liberation Mono',monospace;height:42px;letter-spacing:-0.2026px;color:#000;-webkit-text-stroke:0.3px;">;</span>
<span style="left:885px;top:1210.80px;font:italic 27px/42px 'Liberation Mono',monospace;height:42px;letter-spacing:-0.2026px;color:#000;-webkit-text-stroke:0.3px;">open</span>
<span style="left:949px;top:1210.80px;font:normal 27px/42px 'Liberation Mono',monospace;height:42px;letter-spacing:-0.2026px;color:#000;-webkit-text-stroke:0.3px;">(</span>
<div style="left:969px;top:1213px;width:280px;height:34px;background:#f4f4f4;border-radius:8px"></div>
<div style="left:1269px;top:1240px;width:416px;height:2px;background:#737373;"></div>
<span style="left:1253px;top:1210.80px;font:normal 27px/42px 'Liberation Mono',monospace;height:42px;letter-spacing:-0.2026px;color:#067d17;-webkit-text-stroke:0.3px;">&quot;</span>
<span style="left:1269px;top:1210.80px;font:normal 27px/42px 'Liberation Mono',monospace;height:42px;letter-spacing:-0.2026px;color:#067d17;-webkit-text-stroke:0.3px;">https://www.jetbrains.com/</span>
<span style="left:1685px;top:1210.80px;font:normal 27px/42px 'Liberation Mono',monospace;height:42px;letter-spacing:-0.2026px;color:#067d17;-webkit-text-stroke:0.3px;">&quot;</span>
<span style="left:1701px;top:1210.80px;font:normal 27px/42px 'Liberation Mono',monospace;height:42px;letter-spacing:-0.2026px;color:#000;-webkit-text-stroke:0.3px;">);</span>
<span style="left:821px;top:1252.80px;font:normal 27px/42px 'Liberation Mono',monospace;height:42px;letter-spacing:-0.2026px;color:#000;-webkit-text-stroke:0.3px;">}</span>
<svg style="left:736px;top:1258px" width="18" height="24" viewBox="0 0 18 24"><path d="M1,23 H17 V10 L9,2 L1,10 Z" fill="#fff" stroke="#cfcfcf" stroke-width="1.7"/><path d="M4.5,15 H13.5" stroke="#c2c2c2" stroke-width="1.7"/></svg>
<div style="left:757px;top:1273px;width:1528px;height:28px;background:#f5f5f5;"></div>
<div style="left:763px;top:1279px;width:1196px;height:16px;background:#c4c4c4;border-radius:8px"></div>
<svg style="left:2246.5px;top:677.5px" width="24" height="20" viewBox="0 0 24 20"><path d="M0.8,10.6 L4.2,7.2 L9,12 L19.8,1.2 L23.2,4.6 L9,18.8 Z" fill="#59a869"/></svg>
<div style="left:2263px;top:719px;width:16px;height:160px;background:rgba(170,170,170,0.65);border-radius:8px"></div>
<div style="left:2257px;top:761px;width:29px;height:4px;background:#c9a4ee;"></div>
<span style="left:945.00px;top:3.99px;font:normal normal 26px/40px 'Liberation Sans',sans-serif;height:40px;color:#4a4a4a;letter-spacing:0.216px;-webkit-text-stroke:0.18px;">Selenium-Demo – MainPage.java</span>
<span style="left:24.75px;top:52.88px;font:normal bold 24px/40px 'Liberation Sans',sans-serif;height:40px;color:#000;letter-spacing:1.378px;-webkit-text-stroke:0.18px;">Selenium-Demo</span>
<span style="left:257.10px;top:52.88px;font:normal normal 24px/40px 'Liberation Sans',sans-serif;height:40px;color:#000;letter-spacing:0.954px;-webkit-text-stroke:0.18px;">src</span>
<span style="left:324.55px;top:52.88px;font:normal normal 24px/40px 'Liberation Sans',sans-serif;height:40px;color:#000;letter-spacing:1.109px;-webkit-text-stroke:0.18px;">main</span>
<span style="left:413.90px;top:52.88px;font:normal normal 24px/40px 'Liberation Sans',sans-serif;height:40px;color:#000;letter-spacing:-0.227px;-webkit-text-stroke:0.18px;">java</span>
<span style="left:492.00px;top:52.88px;font:normal normal 24px/40px 'Liberation Sans',sans-serif;height:40px;color:#000;letter-spacing:1.826px;-webkit-text-stroke:0.18px;">com</span>
<span style="left:575.45px;top:52.88px;font:normal normal 24px/40px 'Liberation Sans',sans-serif;height:40px;color:#000;letter-spacing:0.847px;-webkit-text-stroke:0.18px;">example</span>
<span style="left:704.55px;top:52.88px;font:normal normal 24px/40px 'Liberation Sans',sans-serif;height:40px;color:#000;letter-spacing:0.531px;-webkit-text-stroke:0.18px;">Selenium_Demo</span>
<span style="left:953.75px;top:52.88px;font:normal normal 24px/40px 'Liberation Sans',sans-serif;height:40px;color:#000;letter-spacing:0.632px;-webkit-text-stroke:0.18px;">MainPage</span>
<span style="left:1586.00px;top:52.86px;font:normal normal 23.5px/40px 'Liberation Sans',sans-serif;height:40px;color:#000;letter-spacing:0.359px;-webkit-text-stroke:0.18px;">Add Configuration...</span>
<span style="left:57.28px;top:110.31px;font:normal normal 24.2px/40px 'Liberation Sans',sans-serif;height:40px;color:#000;letter-spacing:1.087px;-webkit-text-stroke:0.18px;">Project</span>
<span style="left:87.10px;top:159.99px;font:normal bold 26px/40px 'Liberation Sans',sans-serif;height:40px;color:#000;letter-spacing:1.366px;-webkit-text-stroke:0.18px;">Selenium-Demo</span>
<span style="left:316.50px;top:159.99px;font:normal normal 26px/40px 'Liberation Sans',sans-serif;height:40px;color:#8c8c8c;letter-spacing:1.015px;-webkit-text-stroke:0.18px;width:314px;overflow:hidden;">~/IdeaProjects/Selenium-Demo</span>
<span style="left:123.10px;top:199.99px;font:normal normal 26px/40px 'Liberation Sans',sans-serif;height:40px;color:#000;letter-spacing:1.511px;-webkit-text-stroke:0.18px;">src</span>
<span style="left:158.10px;top:239.99px;font:normal normal 26px/40px 'Liberation Sans',sans-serif;height:40px;color:#000;letter-spacing:1.368px;-webkit-text-stroke:0.18px;">main</span>
<span style="left:195.94px;top:279.99px;font:normal normal 26px/40px 'Liberation Sans',sans-serif;height:40px;color:#000;letter-spacing:-0.079px;-webkit-text-stroke:0.18px;">java</span>
<span style="left:230.94px;top:319.99px;font:normal normal 26px/40px 'Liberation Sans',sans-serif;height:40px;color:#000;letter-spacing:0.889px;-webkit-text-stroke:0.18px;">com.example.Selenium_Demo</span>
<span style="left:266.74px;top:359.99px;font:normal normal 26px/40px 'Liberation Sans',sans-serif;height:40px;color:#000;letter-spacing:0.812px;-webkit-text-stroke:0.18px;">MainPage</span>
<span style="left:159.90px;top:399.99px;font:normal normal 26px/40px 'Liberation Sans',sans-serif;height:40px;color:#000;letter-spacing:1.439px;-webkit-text-stroke:0.18px;">test</span>
<span style="left:195.94px;top:439.99px;font:normal normal 26px/40px 'Liberation Sans',sans-serif;height:40px;color:#000;letter-spacing:-0.079px;-webkit-text-stroke:0.18px;">java</span>
<span style="left:230.94px;top:479.99px;font:normal normal 26px/40px 'Liberation Sans',sans-serif;height:40px;color:#000;letter-spacing:0.889px;-webkit-text-stroke:0.18px;">com.example.Selenium_Demo</span>
<span style="left:267.54px;top:519.99px;font:normal normal 26px/40px 'Liberation Sans',sans-serif;height:40px;color:#000;letter-spacing:0.497px;-webkit-text-stroke:0.18px;">MainPageTest</span>
<span style="left:122.10px;top:559.99px;font:normal normal 26px/40px 'Liberation Sans',sans-serif;height:40px;color:#000;letter-spacing:1.339px;-webkit-text-stroke:0.18px;">browsers.json</span>
<span style="left:122.10px;top:599.99px;font:normal normal 26px/40px 'Liberation Sans',sans-serif;height:40px;color:#000;letter-spacing:1.710px;-webkit-text-stroke:0.18px;">pom.xml</span>
<span style="left:86.94px;top:639.99px;font:normal normal 26px/40px 'Liberation Sans',sans-serif;height:40px;color:#000;letter-spacing:1.036px;-webkit-text-stroke:0.18px;">External Libraries</span>
<span style="left:87.04px;top:679.99px;font:normal normal 26px/40px 'Liberation Sans',sans-serif;height:40px;color:#000;letter-spacing:1.140px;-webkit-text-stroke:0.18px;">Scratches and Consoles</span>
<span style="left:1822.08px;top:1303.58px;font:normal normal 22px/40px 'Liberation Sans',sans-serif;height:40px;color:#000;letter-spacing:-0.774px;-webkit-text-stroke:0.18px;">1:1</span>
<span style="left:1875.00px;top:1303.58px;font:normal normal 22px/40px 'Liberation Sans',sans-serif;height:40px;color:#000;letter-spacing:-0.335px;-webkit-text-stroke:0.18px;">LF</span>
<span style="left:1925.10px;top:1303.58px;font:normal normal 22px/40px 'Liberation Sans',sans-serif;height:40px;color:#000;letter-spacing:1.452px;-webkit-text-stroke:0.18px;">UTF-8</span>
<span style="left:2020.00px;top:1303.58px;font:normal normal 22px/40px 'Liberation Sans',sans-serif;height:40px;color:#000;letter-spacing:0.981px;-webkit-text-stroke:0.18px;">4 spaces</span>
<span style="left:689.04px;top:110.38px;font:normal normal 22px/40px 'Liberation Sans',sans-serif;height:40px;color:#000;letter-spacing:0.542px;-webkit-text-stroke:0.18px;">MainPage.java</span>
<span style="left:1555.29px;top:366.68px;font:normal normal 24px/40px 'Liberation Sans',sans-serif;height:40px;color:#7b7b7b;letter-spacing:1.262px;-webkit-text-stroke:0.18px;">cssSelector:</span>
<span style="left:1444.50px;top:408.68px;font:normal normal 24px/40px 'Liberation Sans',sans-serif;height:40px;color:#7b7b7b;letter-spacing:1.104px;-webkit-text-stroke:0.18px;">xpathExpression:</span>
<span style="left:1475.29px;top:450.68px;font:normal normal 24px/40px 'Liberation Sans',sans-serif;height:40px;color:#7b7b7b;letter-spacing:1.262px;-webkit-text-stroke:0.18px;">cssSelector:</span>
<span style="left:689.04px;top:616.38px;font:normal normal 22px/40px 'Liberation Sans',sans-serif;height:40px;color:#000;letter-spacing:0.513px;-webkit-text-stroke:0.18px;">MainPageTest.java</span>
<span style="left:1827.12px;top:998.68px;font:normal normal 24px/40px 'Liberation Sans',sans-serif;height:40px;color:#7b7b7b;letter-spacing:1.431px;-webkit-text-stroke:0.18px;">name:</span>
<span style="left:978.71px;top:1208.68px;font:normal normal 24px/40px 'Liberation Sans',sans-serif;height:40px;color:#7b7b7b;letter-spacing:1.262px;-webkit-text-stroke:0.18px;">relativeOrAbsoluteUrl:</span>
</div></body></html>
